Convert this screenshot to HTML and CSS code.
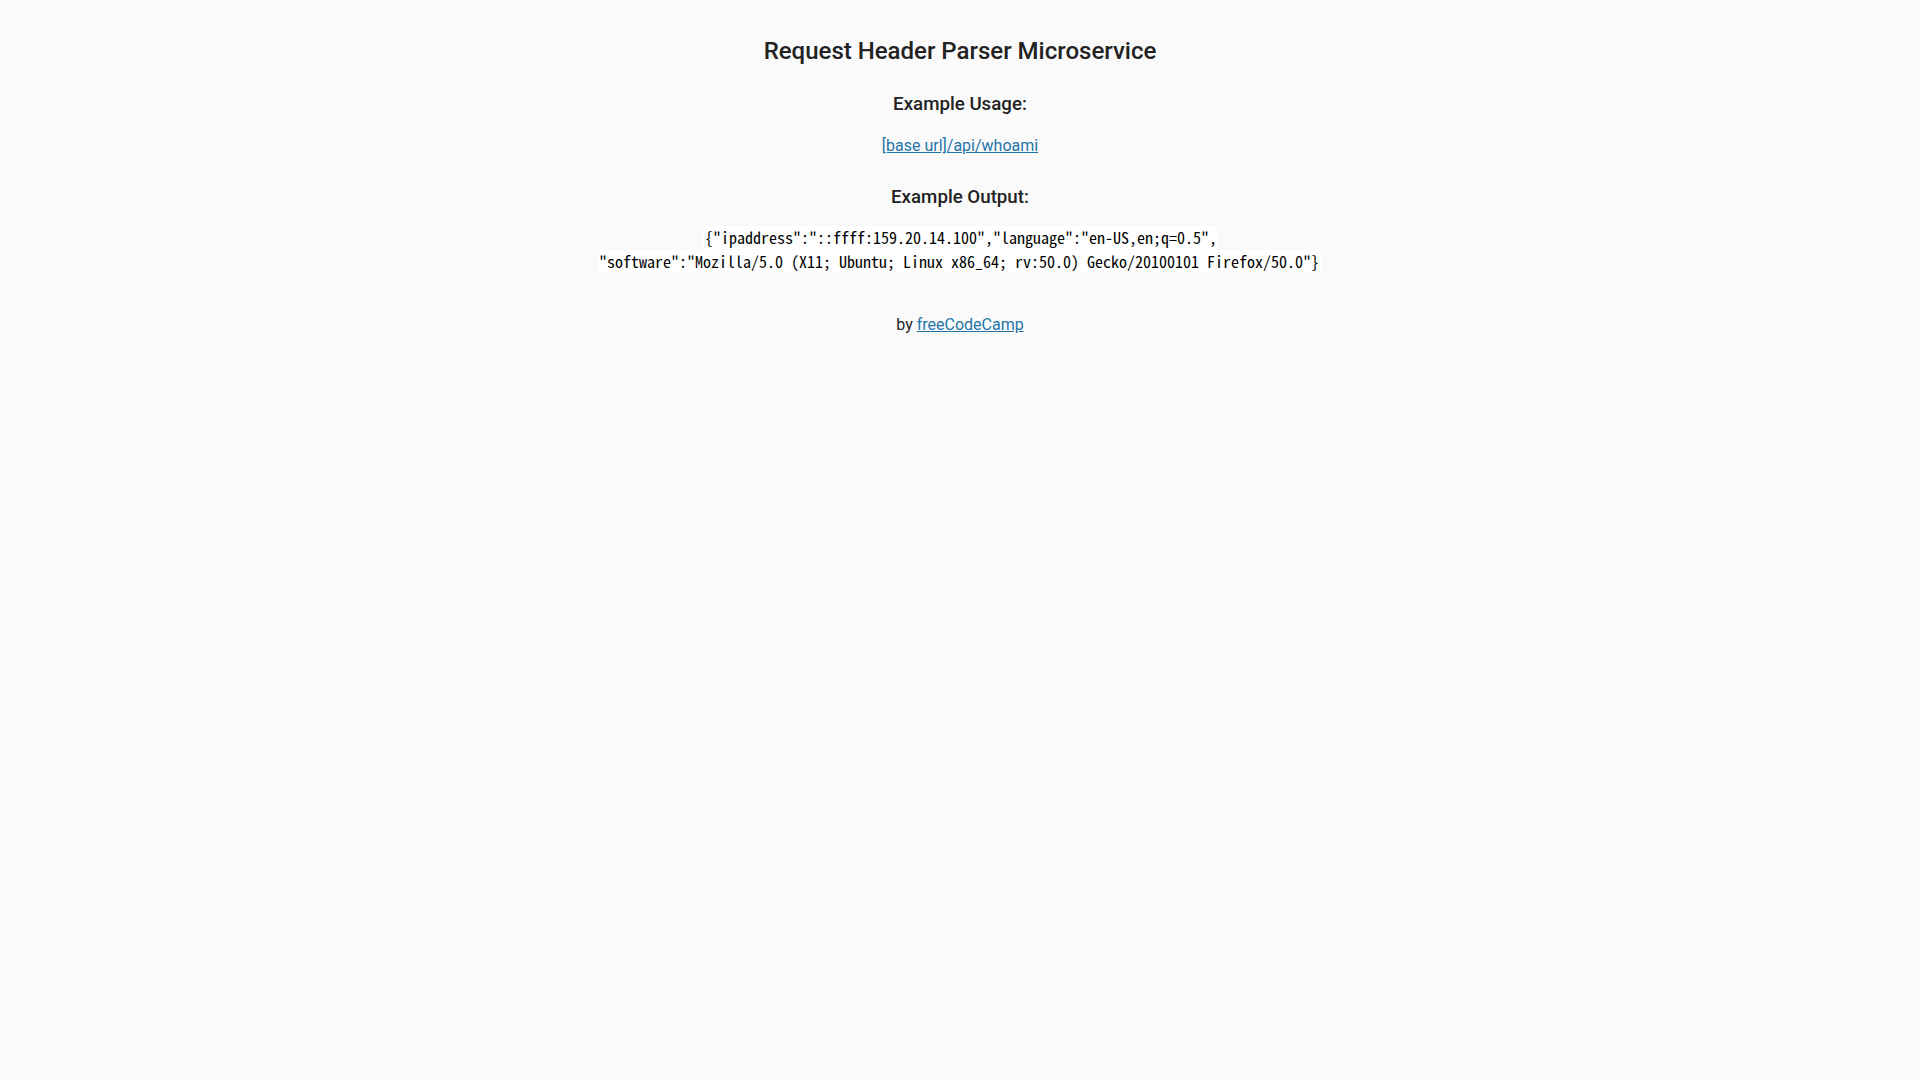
FILE: index.html
```html
<!DOCTYPE html>
<html>
<head>
<meta charset="utf-8">
<title>Request Header Parser</title>
<link rel="stylesheet" href="styles.css">
</head>
<body>
<div class="container">
  <h2 class="title">Request Header Parser Microservice</h2>
  <h3 class="heading heading-usage">Example Usage:</h3>
  <p class="para para-usage"><a class="link" href="#">[base url]/api/whoami</a></p>
  <h3 class="heading heading-output">Example Output:</h3>
  <p class="para para-output"><code class="code"><span class="code-line code-first">{"ipaddress":"::ffff:159.20.14.100","language":"en-US,en;q=0.5",</span><br><span class="code-line code-last">"software":"Mozilla/5.0 (X11; Ubuntu; Linux x86_64; rv:50.0) Gecko/20100101 Firefox/50.0"}</span></code></p>
</div>
<div class="footer">
  <p class="para">by <a class="link" href="#">freeCodeCamp</a></p>
</div>
</body>
</html>
```
FILE: styles.css
```css
html, body {
  margin: 0;
  padding: 0;
}
body {
  font-family: Roboto, "Liberation Sans", sans-serif;
  font-size: 16px;
  line-height: 19px;
  color: #222;
  background: #fafafa;
  text-align: center;
}
.container {
  padding-top: 37px;
}
.title {
  font-size: 24px;
  line-height: 28px;
  font-weight: 500;
  margin: 0 0 27.5px;
}
.heading {
  font-size: 18.72px;
  line-height: 22px;
  font-weight: 500;
  margin: 0;
}
.heading-usage {
  margin-bottom: 21px;
}
.heading-output {
  margin-bottom: 19px;
}
.para {
  margin: 0;
}
.para-usage {
  margin-bottom: 31.5px;
}
.para-output {
  line-height: 23.5px;
}
.link {
  color: #2574a9;
}
.code {
  font-family: "Noto Sans Mono CJK JP", "Liberation Mono", monospace;
  font-size: 16px;
  line-height: 16px;
  color: #000;
}
.code-line {
  display: inline-block;
  line-height: 16px;
  background: #fff;
  padding: 3px 0 4px;
  margin: -3px 0 -4px;
  white-space: pre;
}
.code-first {
  padding-left: 2px;
}
.code-last {
  padding-right: 2px;
}
.footer {
  margin-top: 40.5px;
}
```
